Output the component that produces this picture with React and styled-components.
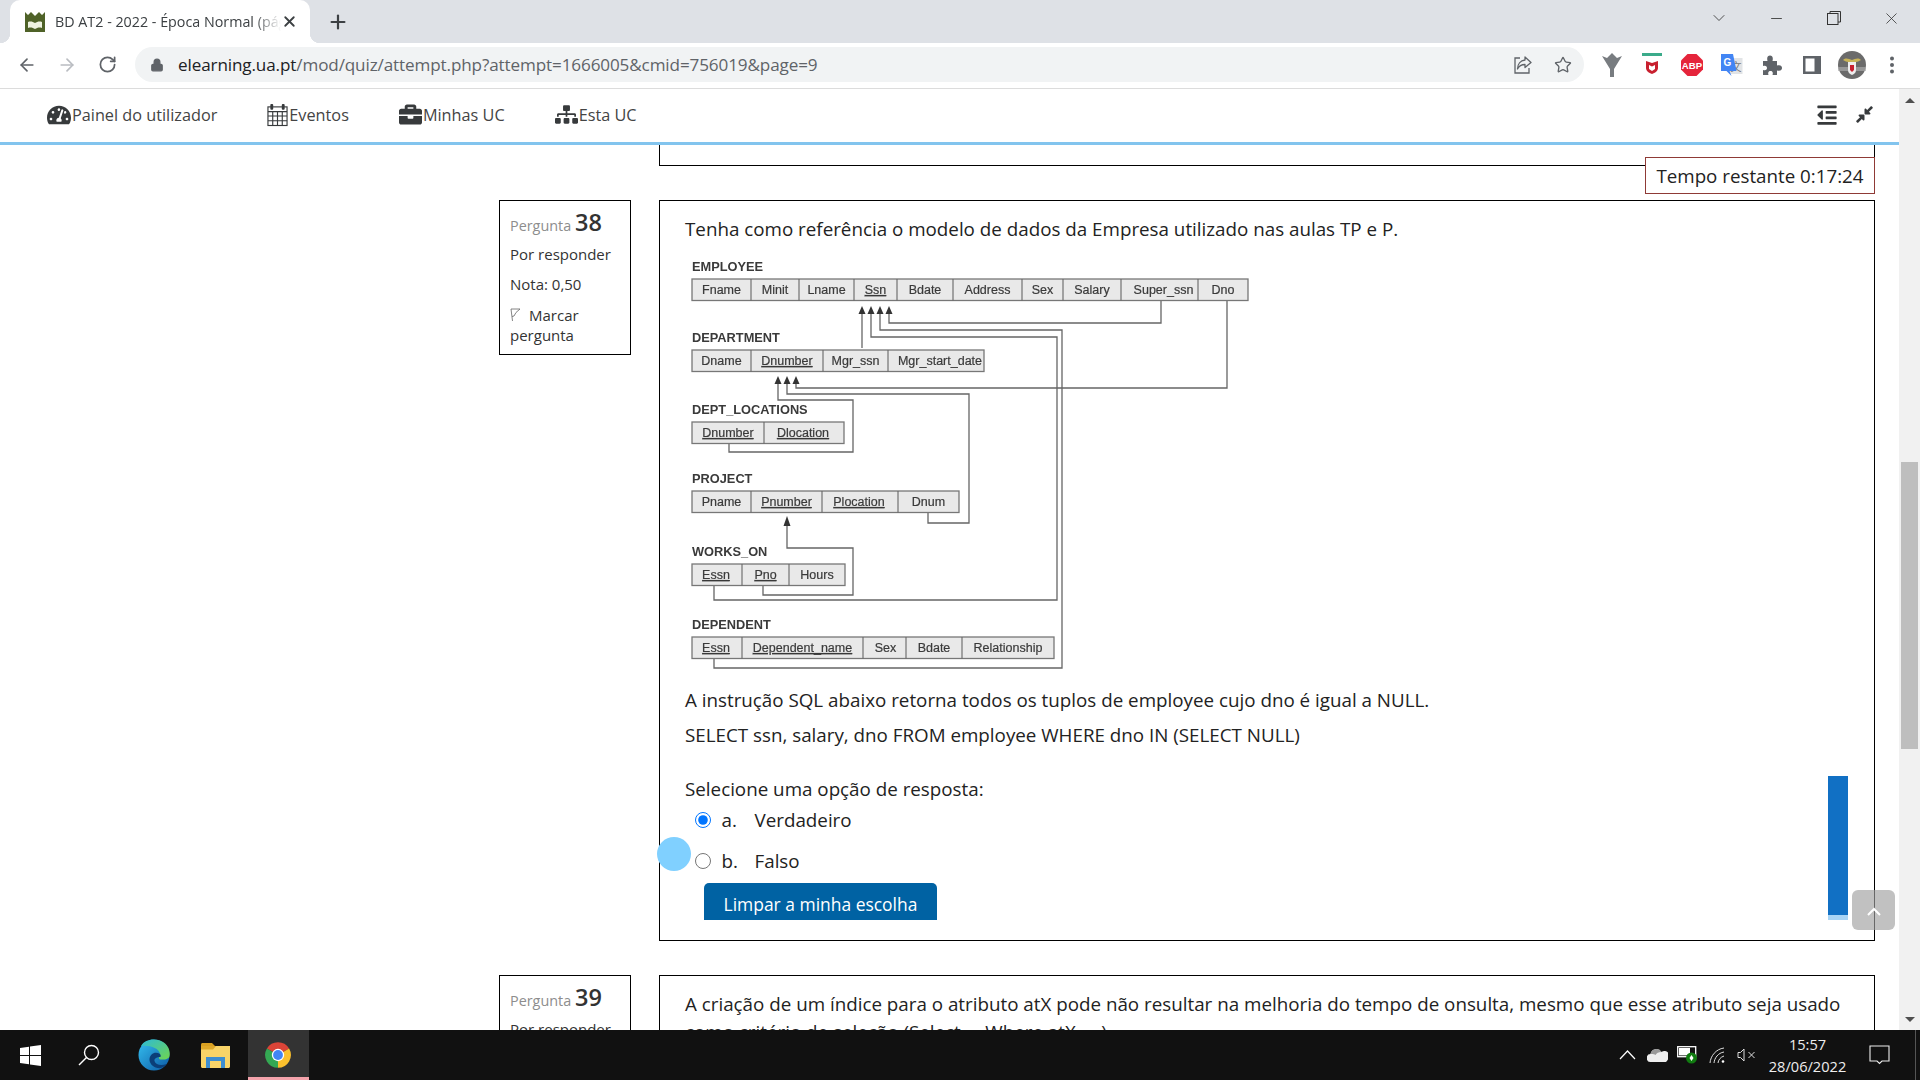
import React from "react";
import styled, { createGlobalStyle } from "styled-components";
import { ArrowLeft, ArrowRight, RotateCw, Lock, Star, Plus, X, ChevronDown, Minus } from "lucide-react";
import { FaTachometerAlt, FaBriefcase, FaSitemap, FaOutdent, FaCompressAlt } from "react-icons/fa";

const Global = createGlobalStyle`
  html, body { margin: 0; padding: 0; height: 100%; overflow: hidden; background: #fff; }
  * { box-sizing: border-box; }
  body { font-family: "Open Sans", "Noto Sans", sans-serif; color: #222; }
`;

const Screen = styled.div`
  width: 1920px; height: 1080px; display: flex; flex-direction: column; overflow: hidden;
`;
const TabBar = styled.div`
  height: 43px; background: #dee1e6; display: flex; padding-left: 10px; align-items: stretch; flex: none;
`;
const Tab = styled.div`
  width: 300px; background: #fff; border-radius: 10px 10px 0 0; display: flex; align-items: center;
  padding: 0 12px 0 14px; position: relative;
  &::before, &::after { content: ""; position: absolute; bottom: 0; width: 10px; height: 10px; }
  &::before { left: -10px; background: radial-gradient(circle at 0 0, #dee1e6 10px, #fff 10.5px); }
  &::after { right: -10px; background: radial-gradient(circle at 100% 0, #dee1e6 10px, #fff 10.5px); }
`;
const TabTitle = styled.span`
  flex: 1; margin: -1px 0 0 9px; font-size: 14.3px; color: #3c4043; white-space: nowrap; overflow: hidden;
  -webkit-mask-image: linear-gradient(90deg, #000 88%, transparent 100%);
  mask-image: linear-gradient(90deg, #000 88%, transparent 100%);
`;
const NewTab = styled.div`
  width: 56px; display: flex; align-items: center; justify-content: center; color: #3c4043;
`;
const WindowControls = styled.div`
  margin-left: auto; display: flex; align-items: center; height: 36px; color: #333;
`;
const WinSlot = styled.div`
  width: 57.5px; display: flex; align-items: center; justify-content: center;
`;
const Toolbar = styled.div`
  height: 46px; background: #fff; border-bottom: 1px solid #dcdcdc; display: flex; align-items: center;
  padding: 0 8px 2px 7px; flex: none;
`;
const ToolBtn = styled.div`
  width: 40px; height: 36px; display: flex; align-items: center; justify-content: center;
  color: ${p => p.$dim ? "#b9bcc1" : "#5f6368"}; flex: none;
`;
const Omnibox = styled.div`
  flex: 1; height: 35px; margin: 0 8px 0 8px; border-radius: 18px; background: #f1f3f4; display: flex;
  align-items: center; padding: 0 1px 0 15px; font-family: "Open Sans", sans-serif;
`;
const Url = styled.div`
  flex: 1; margin-left: 14px; font-size: 17.1px; color: #5f6368; white-space: nowrap; letter-spacing: -0.12px;
  b { font-weight: 400; color: #202124; }
`;
const Body = styled.div`
  flex: 1; display: flex; min-height: 0;
`;
const PageCol = styled.div`
  flex: 1; display: flex; flex-direction: column; min-width: 0;
`;
const Nav = styled.div`
  height: 56px; border-bottom: 3px solid #82c4ee; display: flex; align-items: center; padding: 0 25px 2px 47px;
  flex: none; color: #373a3c;
`;
const NavItem = styled.div`
  display: flex; align-items: center; font-size: 16.25px; margin-right: 50px; color: #444;
  svg { margin-right: 1px; color: #373a3c; }
`;
const NavRight = styled.div`
  margin-left: auto; display: flex; align-items: center; gap: 17px; color: #373a3c;
`;
const Main = styled.div`
  flex: 1; position: relative; overflow: hidden; padding: 0 24px 0 499px; min-height: 0;
`;
const Stub = styled.div`
  height: 21px; margin-left: 160px; border: 1px solid #000; border-top: 0;
`;
const Question = styled.div`
  display: flex; gap: 28px; align-items: flex-start; margin-top: ${p => p.$top}px;
`;
const Info = styled.div`
  width: 132px; flex: none; border: 1px solid #000; padding: 5px 10px 11px; height: ${p => p.$h}px;
  font-size: 15px; color: #333;
`;
const QNo = styled.div`
  font-size: 14.4px; color: #8d8d8d; line-height: 32px; height: 32px;
  b { font-size: 23.5px; color: #333; font-weight: 600; }
`;
const InfoLine = styled.div`
  line-height: 20px; margin-top: ${p => p.$top ?? 10}px;
`;
const Box = styled.div`
  flex: 1; border: 1px solid #000; padding: 14px 25px 0; height: ${p => p.$h}px; font-size: 18.8px; line-height: 28px;
  color: #222;
`;
const P = styled.p`
  margin: ${p => p.$top ?? 0}px 0 0; white-space: ${p => p.$wrap ? "normal" : "nowrap"};
`;
const DiagramWrap = styled.svg`
  display: block; margin-top: 13px; width: 590px; height: 425px; filter: blur(0.45px);
`;
const Option = styled.label`
  display: flex; align-items: center; height: 28px; margin-top: ${p => p.$top}px; padding-left: 10px;
  input { width: 16px; height: 16px; margin: 0 10.5px 0 0; accent-color: #0075ff; }
`;
const OptKey = styled.span` width: 33px; `;
const ClearClip = styled.div`
  margin: 8px 0 0 19px; width: 233px; height: 37px; overflow: hidden; border-radius: 5px 5px 0 0;
`;
const ClearBtn = styled.div`
  height: 42px; background: #0062a3; color: #fff; display: flex; align-items: center; justify-content: center;
  font-size: 17.45px;
`;
const Timer = styled.div`
  position: absolute; top: 12px; right: 24px; width: 230px; height: 37px; background: #fff;
  border: 1.5px solid #8f3a36; font-size: 18.75px; display: flex; align-items: center; justify-content: center; color: #222;
`;
const Blob = styled.div`
  position: absolute; left: 657px; top: 692px; width: 34px; height: 34px; border-radius: 50%; background: #80d0ff;
`;
const SideBar = styled.div`
  position: absolute; left: 1828px; top: 631px; width: 20px; height: 144px; background: #1170c4;
  border-bottom: 5px solid #a8d4f5;
`;
const TopBtn = styled.div`
  position: absolute; left: 1852px; top: 745px; width: 43px; height: 40px; border-radius: 6px;
  background: rgba(160,160,160,.65); color: #fff; display: flex; align-items: center; justify-content: center;
  padding-top: 3px;
`;
const Scrollbar = styled.div`
  width: 21px; flex: none; background: #f1f1f1; display: flex; flex-direction: column; align-items: center;
`;
const ScrollArrow = styled.div`
  width: 0; height: 0; border-left: 5px solid transparent; border-right: 5px solid transparent;
  ${p => p.$down ? "border-top: 5px solid #505050; margin: auto 0 8px;" : "border-bottom: 5px solid #505050; margin-top: 9px;"}
`;
const Thumb = styled.div`
  width: 17px; height: 287px; background: #bebebe; margin-top: 359px;
`;
const Taskbar = styled.div`
  height: 50px; flex: none; background: #111; display: flex; align-items: stretch; color: #fff;
`;
const TaskSlot = styled.div`
  width: ${p => p.$w}px; display: flex; align-items: center; justify-content: center; margin-right: ${p => p.$gap ?? 0}px;
  ${p => p.$active ? "background: #333; border-bottom: 3px solid #f4a3ab; padding: 3px 2px 0 0;" : ""}
`;
const Tray = styled.div`
  margin-left: auto; display: flex; align-items: center;
`;
const TraySlot = styled.div`
  width: 30px; display: flex; align-items: center; justify-content: center;
`;
const Clock = styled.div`
  width: 91px; text-align: center; font-size: 14.6px; line-height: 22px; color: #eee; margin-top: -1px;
`;
const Notif = styled.div`
  width: 67px; height: 100%; display: flex; align-items: center; justify-content: center; padding-right: 15px; position: relative;
  &::after { content: ""; position: absolute; right: 4px; top: 0; bottom: 0; width: 1px; background: #555; }
`;

const Favicon = () => (
  <svg width="22" height="22" viewBox="0 0 22 22">
    <path d="M1 1l3 3 3-3 4 4 4-4 3 3 3-3v20H1z" fill="#4f6228" />
    <path d="M4 11c3-1 5 0 7 1 2-1 4-2 7-1v6c-3-1-5 0-7 1-2-1-4-2-7-1z" fill="#eef2e0" />
  </svg>
);
const ShareIcon = () => (
  <svg width="20" height="20" viewBox="0 0 20 20" fill="none" stroke="#5f6368" strokeWidth="1.3">
    <path d="M7 3H2v15h14v-5" />
    <path d="M12 2l6 5.5-6 5V9.5C8 9.5 6 11 4.5 14c0-5 3-8.5 7.5-9z" strokeLinejoin="round" />
  </svg>
);
const Funnel = () => (
  <svg width="22" height="26" viewBox="0 0 22 26"><path d="M1 4l5 2 5-5 5 5 5-2-8 13v8h-4v-8z" fill="#787c80" /></svg>
);
const Mcafee = () => (
  <svg width="22" height="24" viewBox="0 0 22 24">
    <rect x="1" y="0" width="20" height="3" fill="#3bab8a" />
    <path d="M5 8l6 2 6-2v7c0 3-3 5-6 6-3-1-6-3-6-6z" fill="#c8202f" />
    <path d="M8 12l3 1.5 3-1.5v4l-3 2-3-2z" fill="#fff" />
  </svg>
);
const Abp = () => (
  <svg width="22" height="22" viewBox="0 0 22 22">
    <path d="M6.5 0h9L22 6.5v9L15.5 22h-9L0 15.5v-9z" fill="#e5243b" />
    <text x="11" y="14.6" textAnchor="middle" fontSize="9.6" fontWeight="700" fontFamily="Liberation Sans" fill="#fff">ABP</text>
  </svg>
);
const Translate = () => (
  <svg width="22" height="24" viewBox="0 0 22 24">
    <rect x="8" y="5" width="13.5" height="16" fill="#e2e4e6" />
    <text x="15" y="18" textAnchor="middle" fontSize="11" fontFamily="Noto Sans CJK SC, sans-serif" fill="#777">文</text>
    <path d="M0 1h12l3.5 17H8.5l2 5-5-5H0z" fill="#4285f4" />
    <text x="6.5" y="13" textAnchor="middle" fontSize="10" fontWeight="700" fontFamily="Liberation Sans" fill="#fff">G</text>
  </svg>
);
const Puzzle = () => (
  <svg width="20" height="20" viewBox="0 0 20 20">
    <path d="M1 6h4.5c-1-4 .5-5.5 2.5-5.5S11.5 2 10.5 6H15v4.5c4-1 5 1 5 2.5s-1 3.5-5 2.5V20h-4.5c1-3-.5-4-2-4s-3 1-2 4H1v-5c3 1 4-.5 4-2S4 10 1 11z" fill="#5f6368" />
  </svg>
);
const SidePanel = () => (
  <svg width="18" height="18" viewBox="0 0 18 18"><path d="M0 0h18v18H0z" fill="#5f6368" /><rect x="2.5" y="2.5" width="9" height="13" fill="#fff" /></svg>
);
const Avatar = () => (
  <svg width="28" height="28" viewBox="0 0 28 28">
    <circle cx="14" cy="14" r="14" fill="#6b6b6b" />
    <path d="M0 16h28v4H0z" fill="#a9a9a9" opacity=".7" />
    <path d="M5 9c3-3 6-1 9 0 3-1 6-3 9 0-2 1-4 2-5 2h-8c-1 0-3-1-5-2z" fill="#c9b458" />
    <path d="M10 11h8v8c0 3-2 4-4 5-2-1-4-2-4-5z" fill="#eee" />
    <path d="M12 14h4v5l-2 2-2-2z" fill="#c8202f" />
  </svg>
);
const Dots = () => (
  <svg width="6" height="18" viewBox="0 0 6 18" fill="#5f6368"><circle cx="3" cy="2.5" r="2" /><circle cx="3" cy="9" r="2" /><circle cx="3" cy="15.5" r="2" /></svg>
);
const Restore = () => (
  <svg width="14" height="14" viewBox="0 0 14 14" fill="none" stroke="#333" strokeWidth="1"><rect x=".5" y="2.5" width="10.500" height="11" /><path d="M3 2.5V.5h10.500V11H11" /></svg>
);
const Calendar = () => (
  <svg width="21" height="24" viewBox="0 0 22 24" fill="none" stroke="#373a3c" strokeWidth="1.2">
    <rect x="1" y="3.5" width="20" height="19.500" />
    <path d="M1 8.5h20M1 13h20M1 18h20M6 8.5V23M11 8.5V23M16 8.5V23" />
    <rect x="3.5" y="0.5" width="3" height="6" fill="#373a3c" stroke="none" rx="1" />
    <rect x="15.5" y="0.5" width="3" height="6" fill="#373a3c" stroke="none" rx="1" />
  </svg>
);
const FlagIcon = () => (
  <svg width="11" height="14" viewBox="0 0 11 14" fill="none" stroke="#666" strokeWidth=".8" style={{ marginRight: 8, verticalAlign: -1 }}>
    <path d="M1 1l1.500 12M1 1h9L6 4.5 4 8 2 8.5" />
  </svg>
);

const WinLogo = () => (
  <svg width="21" height="21" viewBox="0 0 21 21" fill="#fff">
    <path d="M0 3l9-1.300V10H0zM10 1.500L21 0v10H10zM0 11h9v8.300L0 18zM10 11h11v10l-11-1.500z" />
  </svg>
);
const SearchIcon = () => (
  <svg width="22" height="22" viewBox="0 0 22 22" fill="none" stroke="#fff" strokeWidth="1.400">
    <circle cx="13.5" cy="8.5" r="7" /><path d="M8.500 13.500L1 21" />
  </svg>
);
const Edge = () => (
  <svg width="32" height="32" viewBox="0 0 32 32">
    <defs>
      <linearGradient id="eb" x1="0" y1="0" x2="1" y2="1"><stop offset="0" stopColor="#35c1f1" /><stop offset="1" stopColor="#0c59a4" /></linearGradient>
      <linearGradient id="eg" x1="0" y1="0" x2="1" y2="1"><stop offset="0" stopColor="#2dbad8" /><stop offset="1" stopColor="#70d64c" /></linearGradient>
    </defs>
    <circle cx="16" cy="16" r="15.5" fill="url(#eb)" />
    <path d="M3 7C7 0 17-1 24 2.500c6 3 8.500 9 7.500 14.500-.5 3-5 4-9 3.500-3-.5-1-4-.5-5.500C21 9 12 6 3 7z" fill="url(#eg)" />
    <path d="M22 15c-5-3-10 0-10.500 5-.3 4 3 8 8 9 4 .7 7-1 9-4-5 2-11 1-12-3-.5-3 3-4 5.500-4 1 0 1-2 0-3z" fill="#0b3e78" />
  </svg>
);
const Folder = () => (
  <svg width="29" height="25" viewBox="0 0 29 25">
    <path d="M0 1.500C0 .7.700 0 1.500 0H11l3 3h-14z" fill="#d9a021" />
    <path d="M0 3h29v20.500c0 .8-.7 1.500-1.500 1.500h-26C.7 25 0 24.300 0 23.500z" fill="#f9d468" />
    <path d="M0 6.500h12l3-3.500H0z" fill="#e0a92a" />
    <path d="M5 25V14h19v11h-4v-7h-11v7z" fill="#3e8ed0" />
  </svg>
);
const Chrome = () => (
  <svg width="28" height="28" viewBox="0 0 24 24">
    <path d="M12 12L2.470 6.500A11 11 0 0 1 21.530 6.500z" fill="#db4437" />
    <path d="M12 12L21.530 6.500A11 11 0 0 1 12 23z" fill="#fbc02d" />
    <path d="M12 12L12 23A11 11 0 0 1 2.470 6.500z" fill="#34a853" />
    <circle cx="12" cy="12" r="5.3" fill="#fff" />
    <circle cx="12" cy="12" r="4.2" fill="#4285f4" />
  </svg>
);
const Caret = () => (
  <svg width="17" height="10" viewBox="0 0 17 10" fill="none" stroke="#fff" strokeWidth="1.200"><path d="M1 9l7.500-8L16 9" /></svg>
);
const Cloud = () => (
  <svg width="21" height="14" viewBox="0 0 21 14">
    <path d="M4 14a4 4 0 0 1-.5-8 6 6 0 0 1 11-2 5 5 0 0 1 6 8c-.5 1.500-1.500 2-2.500 2z" fill="#eee" />
    <path d="M3.500 6a6 6 0 0 1 11-2c-3 0-5 1-6 3-1-.8-3-1.200-5-1z" fill="#999" />
  </svg>
);
const Battery = () => (
  <svg width="21" height="20" viewBox="0 0 21 20">
    <rect x=".7" y="1.7" width="18" height="10" fill="#111" stroke="#fff" strokeWidth="1.300" />
    <rect x="2" y="3" width="11" height="7.4" fill="#fff" />
    <circle cx="14.5" cy="13" r="5.5" fill="#107c10" />
    <path d="M14.500 10l2 3-2 3-2-3z" fill="#fff" />
  </svg>
);
const Wifi = () => (
  <svg width="17" height="17" viewBox="0 0 17 17" fill="none" stroke="#ddd" strokeWidth="1">
    <path d="M1 16C1.500 9 7 2 15 1M5 16C5.500 11 9 6 15 5M9 16c.3-3 2.500-6 6-7" />
    <circle cx="14" cy="14.5" r="1.3" fill="#fff" stroke="none" />
  </svg>
);
const Mute = () => (
  <svg width="20" height="14" viewBox="0 0 20 14" fill="none" stroke="#ddd" strokeWidth="1">
    <path d="M1 4.500h2.500L7 1v12l-3.500-3.500H1zM11.500 4l6 6M17.500 4l-6 6" />
  </svg>
);
const Bubble = () => (
  <svg width="21" height="20" viewBox="0 0 21 20" fill="none" stroke="#eee" strokeWidth="1.100">
    <path d="M1 1h19v15h-7l-2.500 2.500L8 16H1z" />
  </svg>
);

const tables = [
  { name: "EMPLOYEE", y: 278, x: 692, cols: [["Fname", 751], ["Minit", 799], ["Lname", 854], ["Ssn", 897, 1], ["Bdate", 953], ["Address", 1022], ["Sex", 1063], ["Salary", 1121], ["Super_ssn", 1198, 0, 4], ["Dno", 1248]] },
  { name: "DEPARTMENT", y: 349, x: 692, cols: [["Dname", 751], ["Dnumber", 823, 1], ["Mgr_ssn", 888], ["Mgr_start_date", 984, 0, 4]] },
  { name: "DEPT_LOCATIONS", y: 421, x: 692, cols: [["Dnumber", 764, 1], ["Dlocation", 844, 1, -1]] },
  { name: "PROJECT", y: 490, x: 692, cols: [["Pname", 751], ["Pnumber", 822, 1], ["Plocation", 898, 1, -1], ["Dnum", 959]] },
  { name: "WORKS_ON", y: 563, x: 692, cols: [["Essn", 742, 1, -1], ["Pno", 789, 1], ["Hours", 845]] },
  { name: "DEPENDENT", y: 636, x: 692, cols: [["Essn", 742, 1, -1], ["Dependent_name", 863, 1], ["Sex", 906, 0, 1], ["Bdate", 962], ["Relationship", 1054]] },
];
const links = [
  "M862 312V347",
  "M871 312V336H1057V599H714V584",
  "M880 312V329H1062V667H714V658",
  "M889 312V322H1161V300",
  "M1227 300V387H796V381",
  "M787 381V393H969V522H928V512",
  "M778 381V399H853V451H729V442",
  "M787 525V547H853V594H763V584",
];
const arrows = [[862, 305, 8], [871, 305, 8], [880, 305, 8], [889, 305, 8], [778, 375, 8], [787, 375, 8], [796, 375, 8], [787, 515, 10]];

const Diagram = () => (
  <DiagramWrap viewBox="685 255 590 425">
    {links.map(d => <path key={d} d={d} fill="none" stroke="#666" strokeWidth="1.300" />)}
    {arrows.map(([x, y, h]) => <path key={x + "-" + y} d={`M${x} ${y}l3.500 ${h}h-7z`} fill="#333" />)}
    {tables.map(t => (
      <g key={t.name} fontFamily="Liberation Sans" fontSize="12.500" fill="#3a3a3a">
        <text x={t.x} y={t.y - 8} fontWeight="700" fontSize="12.800">{t.name}</text>
        <rect x={t.x} y={t.y} width={t.cols[t.cols.length - 1][1] - t.x} height="21.500" fill="#e9e9e9" stroke="#777" strokeWidth="1.300" />
        {t.cols.map(([label, end, key, nudge = 0], i) => {
          const start = i ? t.cols[i - 1][1] : t.x;
          return (
            <g key={label}>
              {i < t.cols.length - 1 && <path d={`M${end} ${t.y}v21.500`} stroke="#666" strokeWidth="1.100" />}
              <text x={(start + end) / 2 + nudge} y={t.y + 15} textAnchor="middle" stroke="#3a3a3a" strokeWidth=".2" textDecoration={key ? "underline" : "none"}>{label}</text>
            </g>
          );
        })}
      </g>
    ))}
  </DiagramWrap>
);

export default function App() {
  return (
    <Screen>
      <Global />
      <TabBar>
        <Tab>
          <Favicon />
          <TabTitle>BD AT2 - 2022 - Época Normal (página 10 de 40)</TabTitle>
          <X size={17} color="#3c4043" strokeWidth={2.6} />
        </Tab>
        <NewTab><Plus size={22} strokeWidth={2.4} /></NewTab>
        <WindowControls>
          <WinSlot><ChevronDown size={20} strokeWidth={1} /></WinSlot>
          <WinSlot><Minus size={17} strokeWidth={1.2} /></WinSlot>
          <WinSlot><Restore /></WinSlot>
          <WinSlot><X size={19} strokeWidth={1} /></WinSlot>
        </WindowControls>
      </TabBar>
      <Toolbar>
        <ToolBtn><ArrowLeft size={20} strokeWidth={2} /></ToolBtn>
        <ToolBtn $dim><ArrowRight size={20} strokeWidth={2} /></ToolBtn>
        <ToolBtn><RotateCw size={19} strokeWidth={2.2} /></ToolBtn>
        <Omnibox>
          <Lock size={14} fill="#5f6368" color="#5f6368" />
          <Url><b>elearning.ua.pt</b>/mod/quiz/attempt.php?attempt=1666005&amp;cmid=756019&amp;page=9</Url>
          <ToolBtn><ShareIcon /></ToolBtn>
          <ToolBtn><Star size={18} strokeWidth={1.8} /></ToolBtn>
        </Omnibox>
        <ToolBtn><Funnel /></ToolBtn>
        <ToolBtn><Mcafee /></ToolBtn>
        <ToolBtn><Abp /></ToolBtn>
        <ToolBtn><Translate /></ToolBtn>
        <ToolBtn><Puzzle /></ToolBtn>
        <ToolBtn><SidePanel /></ToolBtn>
        <ToolBtn><Avatar /></ToolBtn>
        <ToolBtn><Dots /></ToolBtn>
      </Toolbar>
      <Body>
        <PageCol>
          <Nav>
            <NavItem><FaTachometerAlt size={24} />Painel do utilizador</NavItem>
            <NavItem><Calendar />Eventos</NavItem>
            <NavItem><FaBriefcase size={23} />Minhas UC</NavItem>
            <NavItem><FaSitemap size={23} />Esta UC</NavItem>
            <NavRight>
              <FaOutdent size={22} />
              <FaCompressAlt size={19} />
            </NavRight>
          </Nav>
          <Main>
            <Stub />
            <Question $top={34}>
              <Info $h={155}>
                <QNo>Pergunta <b>38</b></QNo>
                <InfoLine $top={6}>Por responder</InfoLine>
                <InfoLine>Nota: 0,50</InfoLine>
                <InfoLine $top={11}><FlagIcon />Marcar pergunta</InfoLine>
              </Info>
              <Box $h={741}>
                <P>Tenha como referência o modelo de dados da Empresa utilizado nas aulas TP e P.</P>
                <Diagram />
                <P $top={5}>A instrução SQL abaixo retorna todos os tuplos de employee cujo dno é igual a NULL.</P>
                <P $top={7}>SELECT ssn, salary, dno FROM employee WHERE dno IN (SELECT NULL)</P>
                <P $top={26}>Selecione uma opção de resposta:</P>
                <Option $top={3}><input type="radio" name="q38" defaultChecked /><OptKey>a.</OptKey>Verdadeiro</Option>
                <Option $top={13}><input type="radio" name="q38" /><OptKey>b.</OptKey>Falso</Option>
                <ClearClip><ClearBtn>Limpar a minha escolha</ClearBtn></ClearClip>
              </Box>
            </Question>
            <Question $top={34}>
              <Info $h={155}>
                <QNo>Pergunta <b>39</b></QNo>
                <InfoLine $top={6}>Por responder</InfoLine>
                <InfoLine>Nota: 0,50</InfoLine>
              </Info>
              <Box $h={300}>
                <P $wrap>A criação de um índice para o atributo atX pode não resultar na melhoria do tempo de onsulta, mesmo que esse atributo seja usado como critério de seleção (Select ... Where atX=...)</P>
              </Box>
            </Question>
            <Timer>Tempo restante 0:17:24</Timer>
            <Blob />
            <SideBar />
            <TopBtn><svg width="14" height="9" viewBox="0 0 14 9" fill="none" stroke="#fff" strokeWidth="2"><path d="M1 8l6-6 6 6" /></svg></TopBtn>
          </Main>
        </PageCol>
        <Scrollbar>
          <ScrollArrow />
          <Thumb />
          <ScrollArrow $down />
        </Scrollbar>
      </Body>
      <Taskbar>
        <TaskSlot $w={60}><WinLogo /></TaskSlot>
        <TaskSlot $w={58} $gap={6}><SearchIcon /></TaskSlot>
        <TaskSlot $w={60}><Edge /></TaskSlot>
        <TaskSlot $w={63} $gap={1}><Folder /></TaskSlot>
        <TaskSlot $w={61} $active><Chrome /></TaskSlot>
        <Tray>
          <TraySlot><Caret /></TraySlot>
          <TraySlot><Cloud /></TraySlot>
          <TraySlot><Battery /></TraySlot>
          <TraySlot><Wifi /></TraySlot>
          <TraySlot><Mute /></TraySlot>
          <Clock>15:57<br />28/06/2022</Clock>
          <Notif><Bubble /></Notif>
        </Tray>
      </Taskbar>
    </Screen>
  );
}
